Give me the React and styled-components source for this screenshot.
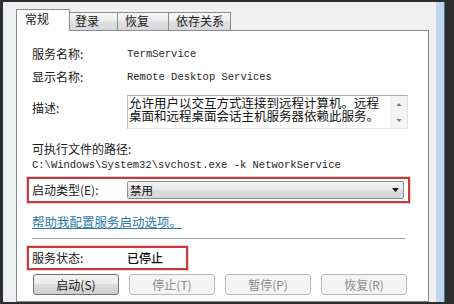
import React from "react";
import styled, { createGlobalStyle } from "styled-components";

const GlobalStyle = createGlobalStyle`
  html, body { margin: 0; padding: 0; background: #2d2d2d; }
  body { font-family: "Noto Sans CJK SC", "Noto Sans", sans-serif; }
  * { box-sizing: border-box; }
`;

const Screen = styled.div`
  width: 454px;
  height: 304px;
  padding: 2px 10px 2px 3px;
  background: #2d2d2d;
  display: flex;
  overflow: hidden;
`;

const Frame = styled.div`
  flex: 1;
  min-width: 0;
  display: flex;
  border-left: 4px solid #e6edf5;
  border-right: 8px solid #bfd5ec;
  box-shadow: 1px 0 0 #55708c;
`;

const Dialog = styled.div`
  flex: 1;
  min-width: 0;
  background: #f0f0f0;
  padding: 7px 7px 0 9px;
  display: flex;
  flex-direction: column;
  overflow: hidden;
`;

const TabStrip = styled.div`
  display: flex;
  align-items: flex-end;
  height: 22px;
  position: relative;
  z-index: 1;
`;

const Tab = styled.div`
  width: ${(p) => p.$w}px;
  padding-left: ${(p) => p.$pl}px;
  font-size: 12px;
  line-height: 14px;
  color: #1a1a1a;
  white-space: nowrap;
  ${(p) =>
    p.$active
      ? `
    height: 22px;
    padding-top: 2px;
    background: #ffffff;
    border: 1px solid #898c95;
    border-bottom: none;
  `
      : `
    height: 18px;
    margin-bottom: 1px;
    padding-top: 1px;
    background: linear-gradient(#f7f7f7, #ececec 45%, #dedede 55%, #d9d9d9);
    border-top: 1px solid #898c95;
    border-right: 1px solid #898c95;
  `}
`;

const Panel = styled.div`
  flex: 1;
  margin-top: -1px;
  background: #ffffff;
  border: 1px solid #898c95;
  padding: 16px 18px 0 15px;
  display: flex;
  flex-direction: column;
`;

const Row = styled.div`
  display: flex;
  align-items: ${(p) => (p.$top ? "flex-start" : "center")};
  min-height: 14px;
  margin-top: ${(p) => p.$mt || 0}px;
`;

const Label = styled.div`
  width: 95px;
  flex: none;
  font-size: 12px;
  line-height: 14px;
  color: #1a1a1a;
  white-space: nowrap;
  padding-top: ${(p) => p.$pt || 0}px;
`;

const Mono = styled.div`
  font-family: "Liberation Mono", monospace;
  font-size: 10.5px;
  line-height: 14px;
  color: #1e1e1e;
  white-space: nowrap;
  margin-top: ${(p) => p.$mt || 0}px;
`;

const DescBox = styled.div`
  width: 281px;
  height: 34px;
  display: flex;
  background: #ffffff;
  border: 1px solid;
  border-color: #a5acb5 #dbdfe6 #e3e9ef #b5bcc5;
`;

const DescText = styled.div`
  width: 252px;
  flex: none;
  padding-left: 1px;
  font-size: 12.5px;
  line-height: 13px;
  color: #111;
`;

const ScrollBar = styled.div`
  width: 17px;
  margin-left: auto;
  background: #f4f4f4;
  border-left: 1px solid #ececec;
  display: flex;
  flex-direction: column;
  align-items: center;
  justify-content: space-between;
  padding: 7px 0 6px;
`;

const RedBox = styled.div`
  display: flex;
  align-items: center;
  width: ${(p) => p.$w}px;
  height: ${(p) => p.$h}px;
  margin-left: -5px;
  margin-top: ${(p) => p.$mt}px;
  padding-left: 3px;
  border: 2px solid #c83a3a;
  box-shadow: 0 0 0 1px rgba(200, 58, 58, 0.25);
`;

const Select = styled.div`
  width: 277px;
  height: 18px;
  display: flex;
  align-items: center;
  justify-content: space-between;
  padding: 0 4px 0 2px;
  border: 1px solid #8f8f8f;
  border-radius: 2px;
  background: linear-gradient(#f2f2f2, #e8e8e8 50%, #dedede 50%, #d6d6d6);
  font-size: 11.5px;
  color: #111;
`;

const Value = styled.div`
  font-size: 12px;
  line-height: 14px;
  color: #111;
  font-weight: 500;
`;

const Link = styled.a`
  display: block;
  margin-top: 12px;
  font-size: 12.5px;
  line-height: 14px;
  color: #2a78a8;
  text-decoration: underline;
  cursor: pointer;
`;

const Separator = styled.div`
  height: 1px;
  margin: 9px 5px 0 0;
  background: #a0a0a0;
`;

const ButtonRow = styled.div`
  display: flex;
  gap: 10px;
  margin: 4px 0 0 1px;
`;

const Button = styled.button`
  width: 86px;
  height: 21px;
  padding: 0;
  font-family: inherit;
  font-size: 12px;
  line-height: 14px;
  border-radius: 3px;
  ${(p) =>
    p.disabled
      ? `
    color: #8a8a8a;
    border: 1px solid #b5b9bc;
    background: #f4f4f4;
  `
      : `
    color: #111;
    border: 1px solid #707070;
    background: linear-gradient(#f3f3f3, #ebebeb 50%, #dddddd 50%, #cfcfcf);
  `}
`;

const Arrow = ({ up, color = "#111", w = 7, h = 4 }) => (
  <svg width={w} height={h} viewBox="0 0 7 4">
    <path d={up ? "M0 4 L3.5 0 L7 4 Z" : "M0 0 L7 0 L3.5 4 Z"} fill={color} />
  </svg>
);

const tabs = [
  { t: "常规", w: 54, pl: 8, active: true },
  { t: "登录", w: 48, pl: 5 },
  { t: "恢复", w: 51, pl: 7 },
  { t: "依存关系", w: 62, pl: 7 },
];

export default function App() {
  return (
    <>
      <GlobalStyle />
      <Screen>
        <Frame>
          <Dialog>
            <TabStrip>
              {tabs.map((tab) => (
                <Tab key={tab.t} $active={tab.active} $w={tab.w} $pl={tab.pl}>
                  {tab.t}
                </Tab>
              ))}
            </TabStrip>
            <Panel>
              <Row>
                <Label>服务名称:</Label>
                <Mono>TermService</Mono>
              </Row>
              <Row $mt={9}>
                <Label>显示名称:</Label>
                <Mono>Remote Desktop Services</Mono>
              </Row>
              <Row $mt={11} $top>
                <Label $pt={6}>描述:</Label>
                <DescBox>
                  <DescText>
                    允许用户以交互方式连接到远程计算机。远程桌面和远程桌面会话主机服务器依赖此服务。
                  </DescText>
                  <ScrollBar>
                    <Arrow up color="#7a7a7a" w={6} h={3} />
                    <Arrow color="#7a7a7a" w={6} h={3} />
                  </ScrollBar>
                </DescBox>
              </Row>
              <Row $mt={13}>
                <Label>可执行文件的路径:</Label>
              </Row>
              <Mono $mt={2}>C:\Windows\System32\svchost.exe -k NetworkService</Mono>
              <RedBox $w={383} $h={26} $mt={5}>
                <Label>启动类型(E):</Label>
                <Select>
                  <span>禁用</span>
                  <Arrow />
                </Select>
              </RedBox>
              <Link>帮助我配置服务启动选项。</Link>
              <Separator />
              <RedBox $w={161} $h={24} $mt={7}>
                <Label>服务状态:</Label>
                <Value>已停止</Value>
              </RedBox>
              <ButtonRow>
                <Button>启动(S)</Button>
                <Button disabled>停止(T)</Button>
                <Button disabled>暂停(P)</Button>
                <Button disabled>恢复(R)</Button>
              </ButtonRow>
            </Panel>
          </Dialog>
        </Frame>
      </Screen>
    </>
  );
}
